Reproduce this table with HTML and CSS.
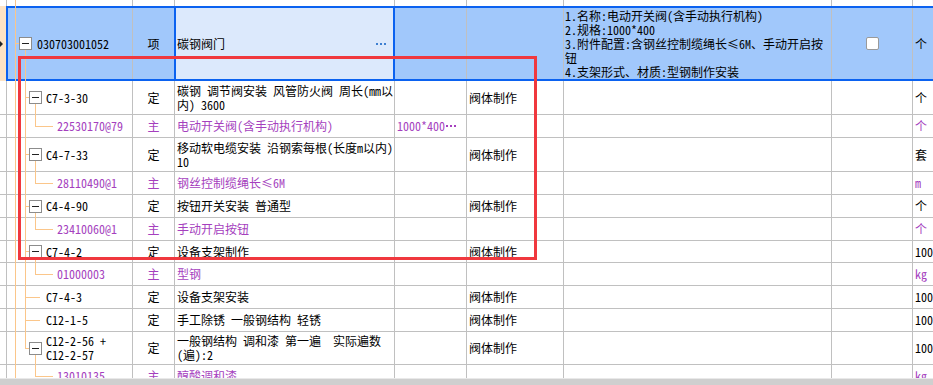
FILE: index.html
```html
<!DOCTYPE html>
<html lang="zh">
<head>
<meta charset="utf-8">
<title>清单定额</title>
<link rel="stylesheet" href="styles.css">
</head>
<body>
<div class="sheet">
  <div class="row h6">
    <div class="cell gut"></div><div class="cell"></div><div class="cell"></div><div class="cell"></div><div class="cell"></div><div class="cell"></div><div class="cell"></div><div class="cell"></div><div class="cell"></div>
  </div>

  <div class="row sel">
    <div class="cell gut"><span class="marker"></span></div>
    <div class="cell l1">030703001052</div>
    <div class="cell type">项</div>
    <div class="cell name">碳钢阀门<span class="dots"><i></i><i></i><i></i></span></div>
    <div class="cell"></div>
    <div class="cell"></div>
    <div class="cell feat">1.名称:电动开关阀(含手动执行机构)<br>2.规格:1000*400<br>3.附件配置:含钢丝控制缆绳长≤6M、手动开启按<br>钮<br>4.支架形式、材质:型钢制作安装</div>
    <div class="cell chk"><span class="box"></span></div>
    <div class="cell">个</div>
  </div>

  <div class="row h34">
    <div class="cell gut"></div>
    <div class="cell l2">C7-3-30</div>
    <div class="cell type">定</div>
    <div class="cell">碳钢 调节阀安装 风管防火阀 周长(mm以<br>内) 3600</div>
    <div class="cell"></div>
    <div class="cell">阀体制作</div>
    <div class="cell"></div>
    <div class="cell"></div>
    <div class="cell">个</div>
  </div>

  <div class="row p">
    <div class="cell gut"></div>
    <div class="cell l3">22530170@79</div>
    <div class="cell type">主</div>
    <div class="cell">电动开关阀(含手动执行机构)</div>
    <div class="cell">1000*400<span class="more"><i></i><i></i><i></i></span></div>
    <div class="cell"></div>
    <div class="cell"></div>
    <div class="cell"></div>
    <div class="cell">个</div>
  </div>

  <div class="row h34">
    <div class="cell gut"></div>
    <div class="cell l2">C4-7-33</div>
    <div class="cell type">定</div>
    <div class="cell">移动软电缆安装 沿钢索每根(长度m以内)<br>10</div>
    <div class="cell"></div>
    <div class="cell">阀体制作</div>
    <div class="cell"></div>
    <div class="cell"></div>
    <div class="cell">套</div>
  </div>

  <div class="row p">
    <div class="cell gut"></div>
    <div class="cell l3">28110490@1</div>
    <div class="cell type">主</div>
    <div class="cell">钢丝控制缆绳长≤6M</div>
    <div class="cell"></div>
    <div class="cell"></div>
    <div class="cell"></div>
    <div class="cell"></div>
    <div class="cell">m</div>
  </div>

  <div class="row">
    <div class="cell gut"></div>
    <div class="cell l2">C4-4-90</div>
    <div class="cell type">定</div>
    <div class="cell">按钮开关安装 普通型</div>
    <div class="cell"></div>
    <div class="cell">阀体制作</div>
    <div class="cell"></div>
    <div class="cell"></div>
    <div class="cell">个</div>
  </div>

  <div class="row p">
    <div class="cell gut"></div>
    <div class="cell l3">23410060@1</div>
    <div class="cell type">主</div>
    <div class="cell">手动开启按钮</div>
    <div class="cell"></div>
    <div class="cell"></div>
    <div class="cell"></div>
    <div class="cell"></div>
    <div class="cell">个</div>
  </div>

  <div class="row h22">
    <div class="cell gut"></div>
    <div class="cell l2">C7-4-2</div>
    <div class="cell type">定</div>
    <div class="cell">设备支架制作</div>
    <div class="cell"></div>
    <div class="cell">阀体制作</div>
    <div class="cell"></div>
    <div class="cell"></div>
    <div class="cell">100kg</div>
  </div>

  <div class="row p">
    <div class="cell gut"></div>
    <div class="cell l3">01000003</div>
    <div class="cell type">主</div>
    <div class="cell">型钢</div>
    <div class="cell"></div>
    <div class="cell"></div>
    <div class="cell"></div>
    <div class="cell"></div>
    <div class="cell">kg</div>
  </div>

  <div class="row">
    <div class="cell gut"></div>
    <div class="cell l2">C7-4-3</div>
    <div class="cell type">定</div>
    <div class="cell">设备支架安装</div>
    <div class="cell"></div>
    <div class="cell">阀体制作</div>
    <div class="cell"></div>
    <div class="cell"></div>
    <div class="cell">100kg</div>
  </div>

  <div class="row">
    <div class="cell gut"></div>
    <div class="cell l2">C12-1-5</div>
    <div class="cell type">定</div>
    <div class="cell">手工除锈 一般钢结构 轻锈</div>
    <div class="cell"></div>
    <div class="cell">阀体制作</div>
    <div class="cell"></div>
    <div class="cell"></div>
    <div class="cell">100kg</div>
  </div>

  <div class="row h33">
    <div class="cell gut"></div>
    <div class="cell l2">C12-2-56 +<br>C12-2-57</div>
    <div class="cell type">定</div>
    <div class="cell">一般钢结构 调和漆 第一遍　实际遍数<br>(遍):2</div>
    <div class="cell"></div>
    <div class="cell">阀体制作</div>
    <div class="cell"></div>
    <div class="cell"></div>
    <div class="cell">100kg</div>
  </div>

  <div class="row p">
    <div class="cell gut"></div>
    <div class="cell l3">13010135</div>
    <div class="cell type">主</div>
    <div class="cell">醇酸调和漆</div>
    <div class="cell"></div>
    <div class="cell"></div>
    <div class="cell"></div>
    <div class="cell"></div>
    <div class="cell">kg</div>
  </div>

  <svg class="tree" width="60" height="378" viewBox="0 0 60 378">
    <path class="tl" d="M15.5 0V378 M16 43.5H19 M25.5 50V348.5 M26 97.5H29 M35.5 104V126.5H53 M26 154.5H29 M35.5 161V183.5H53 M26 206.5H29 M35.5 213V229.5H53 M26 251.5H29 M35.5 258V274.5H53 M26 297.5H40 M26 320.5H40 M26 348.5H29 M35.5 355V376.5H53"/>
    <g class="tb">
      <rect x="19.5" y="37.5" width="12" height="12"/>
      <rect x="29.5" y="91.5" width="12" height="12"/>
      <rect x="29.5" y="148.5" width="12" height="12"/>
      <rect x="29.5" y="200.5" width="12" height="12"/>
      <rect x="29.5" y="245.5" width="12" height="12"/>
      <rect x="29.5" y="342.5" width="12" height="12"/>
    </g>
    <path class="tm" d="M22 43.5H29 M32 97.5H39 M32 154.5H39 M32 206.5H39 M32 251.5H39 M32 348.5H39"/>
  </svg>

  <div class="mark"></div>
</div>
<div class="hbar"></div>
</body>
</html>
```

FILE: styles.css
```css
html, body {
  margin: 0;
  padding: 0;
}

body {
  width: 933px;
  height: 385px;
  overflow: hidden;
  background: #fff;
  color: #000;
  font-family: "Noto Sans Mono CJK SC", "Noto Sans CJK SC", monospace;
  font-size: 12px;
}

.sheet {
  position: relative;
  width: 933px;
  height: 378px;
  overflow: hidden;
}

.row {
  display: grid;
  grid-template-columns: 7px 126px 42px 220px 72px 97px 268px 81px 40px;
  height: 23px;
}

.h6 { height: 6px; }
.h22 { height: 22px; }
.h33 { height: 33px; }
.h34 { height: 34px; }

.cell {
  box-sizing: border-box;
  display: flex;
  align-items: center;
  padding-left: 2px;
  border-right: 1px solid #c0c0c0;
  border-bottom: 1px solid #c0c0c0;
  line-height: 14px;
  white-space: nowrap;
  overflow: hidden;
}

.h6 .cell { border-bottom: none; }

.gut { padding-left: 0; }

.l1 { padding-left: 30px; }
.l2 { padding-left: 39px; }
.l3 { padding-left: 50px; }

.type {
  justify-content: center;
  padding-left: 0;
}

.p .cell { color: #a53fbe; }

.more {
  display: flex;
  gap: 2px;
  margin-left: 1px;
}

.more i {
  display: block;
  width: 2px;
  height: 2px;
  background: currentColor;
}

/* selected row */
.sel {
  position: relative;
  height: 75px;
}

.sel .cell {
  border-bottom: none;
  background: #a1c8fb;
}

.sel::after {
  content: "";
  position: absolute;
  left: 6px;
  right: -4px;
  top: 0;
  bottom: 0;
  border: 2px solid #0b62f0;
  border-right: none;
  pointer-events: none;
}

.sel .gut {
  background: #fde3c4;
  align-items: flex-start;
}

.marker {
  display: block;
  margin-top: 35px;
  width: 0;
  height: 0;
  border-left: 3px solid #222;
  border-top: 3px solid transparent;
  border-bottom: 3px solid transparent;
}

.sel .type { border-right-color: #0b62f0; }

.sel .name {
  background: #dce9fc;
  border-right: 2px solid #0b62f0;
  box-shadow: inset 1px 0 0 #0b62f0;
}

.dots {
  display: flex;
  gap: 2px;
  margin-left: auto;
  margin-right: 7px;
}

.dots i {
  display: block;
  width: 2px;
  height: 2px;
  background: #3d7fd1;
}

.feat {
  padding-left: 1px;
  line-height: 14px;
}

.chk {
  justify-content: center;
  padding-left: 0;
}

.box {
  display: block;
  width: 13px;
  height: 13px;
  box-sizing: border-box;
  background: #fff;
  border: 1px solid #9a9a9a;
  border-radius: 2px;
}

/* tree connectors */
.tree {
  position: absolute;
  left: 0;
  top: 0;
  pointer-events: none;
  shape-rendering: crispEdges;
}

.tl {
  fill: none;
  stroke: #fbc68a;
  stroke-width: 1;
}

.tb rect {
  fill: #fff;
  stroke: #8c8c8c;
  stroke-width: 1;
}

.tm {
  fill: none;
  stroke: #222;
  stroke-width: 1;
}

/* red annotation box */
.mark {
  position: absolute;
  left: 18px;
  top: 56px;
  width: 519px;
  height: 204px;
  box-sizing: border-box;
  border: 3px solid #f0383e;
  pointer-events: none;
}

.hbar {
  height: 6px;
  background: #cfcfcf;
  border-top: 1px solid #e9e9e9;
}
```
